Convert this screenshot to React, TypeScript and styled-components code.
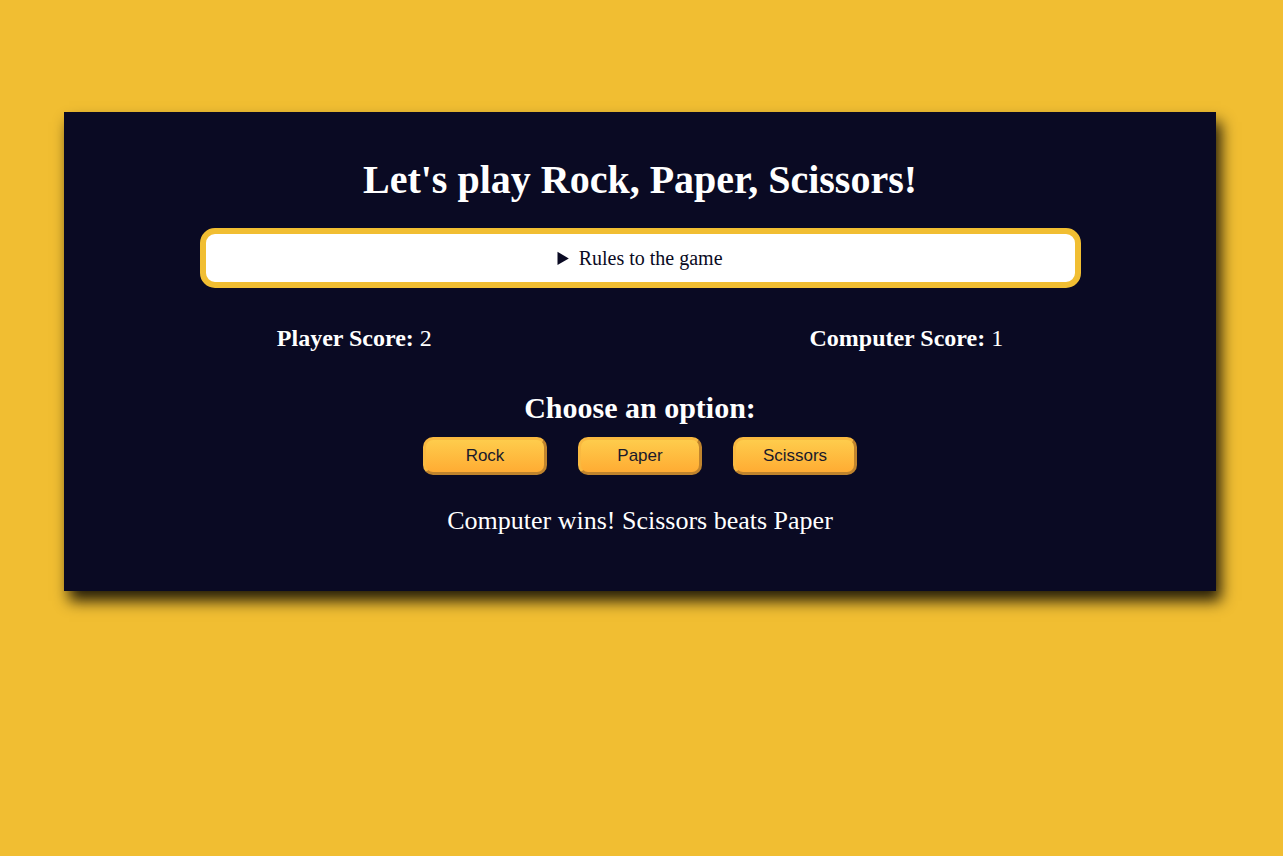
import React from "react";
import styled, { createGlobalStyle } from "styled-components";

const GlobalStyle = createGlobalStyle`
  *, *::before, *::after { box-sizing: border-box; margin: 0; padding: 0; }
  body {
    background-color: #f1be32;
    font-family: "Liberation Serif", "Times New Roman", serif;
    text-align: center;
    min-height: 100vh;
  }
`;

const Page = styled.main`
  padding: 112px 0 80px;
`;

const Card = styled.section`
  width: 1152px;
  margin: 0 67px 0 64px;
  background-color: #0a0a23;
  color: #ffffff;
  padding: 44px 24px 55px;
  box-shadow: 5px 10px 14px rgba(0, 0, 0, 0.85);
`;

const Title = styled.h1`
  font-size: 40px;
  line-height: 48px;
  margin-bottom: 24px;
`;

const Rules = styled.details`
  width: 881px;
  margin: 0 auto;
  padding: 12px 0;
  border: 6px solid #f1be32;
  border-radius: 15px;
  background-color: #ffffff;
  color: #0a0a23;
  font-size: 20px;
`;

const Summary = styled.summary`
  cursor: pointer;
  line-height: 24px;
`;

const ScoreRow = styled.div`
  display: flex;
  justify-content: space-around;
  margin-top: 36px;
  font-size: 24px;
`;

const Score = styled.p`
  line-height: 29px;
`;

const Options = styled.div`
  margin-top: 37px;
`;

const Subtitle = styled.h2`
  font-size: 30px;
  line-height: 36px;
`;

const ButtonRow = styled.div`
  display: flex;
  justify-content: center;
  gap: 31px;
  margin-top: 11px;
`;

const OptionButton = styled.button`
  cursor: pointer;
  width: 124px;
  height: 38px;
  color: #1a1a2a;
  font-family: "Liberation Sans", Arial, sans-serif;
  font-size: 17px;
  background-color: #feac32;
  background-image: linear-gradient(#fecc4c, #ffac33);
  border: 3px solid #feac32;
  border-color: #f9b940 #c0842d #c0842d #f9b940;
  border-radius: 10px;
`;

const Result = styled.p`
  margin-top: 30px;
  font-size: 26px;
  line-height: 31px;
`;

export default function App() {
  return (
    <>
      <GlobalStyle />
      <Page>
        <Card>
          <Title>Let's play Rock, Paper, Scissors!</Title>
          <Rules>
            <Summary>Rules to the game</Summary>
          </Rules>
          <ScoreRow>
            <Score>
              <strong>Player Score:</strong> 2
            </Score>
            <Score>
              <strong>Computer Score:</strong> 1
            </Score>
          </ScoreRow>
          <Options>
            <Subtitle>Choose an option:</Subtitle>
            <ButtonRow>
              <OptionButton>Rock</OptionButton>
              <OptionButton>Paper</OptionButton>
              <OptionButton>Scissors</OptionButton>
            </ButtonRow>
          </Options>
          <Result>Computer wins! Scissors beats Paper</Result>
        </Card>
      </Page>
    </>
  );
}
